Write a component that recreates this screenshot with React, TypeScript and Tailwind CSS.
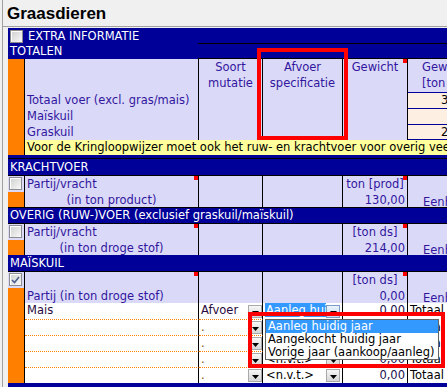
import clsx from "clsx";

const font = "font-['DejaVu_Sans',sans-serif]";

// column widths incl. right border
const C0 = "w-[17px] shrink-0 border-r border-black";
const C1 = "w-[174px] shrink-0 border-r border-black";
const C2 = "w-[64px] shrink-0 border-r border-black";
const C3 = "w-[80px] shrink-0 border-r border-black";
const C4 = "w-[65px] shrink-0 border-r border-black";
const C5 = "w-[76px] shrink-0";

function Checkbox({ checked = false }: { checked?: boolean }) {
  return (
    <div className="flex h-[13px] w-[13px] items-center justify-center border border-[#8d8d8d] bg-linear-to-br from-[#cfcfcf] to-[#f9f9f9] shadow-[inset_1px_1px_0_#ffffff]">
      {checked && (
        <svg width="9" height="8" viewBox="0 0 9 8">
          <path d="M1 4l2.5 2.5L8 1" fill="none" stroke="#4b5d8c" strokeWidth="1.6" />
        </svg>
      )}
    </div>
  );
}

function DropButton({ focused = false }: { focused?: boolean }) {
  return (
    <div
      className={clsx(
        "flex h-[13px] w-[14px] shrink-0 items-end justify-center border pb-[2px]",
        focused
          ? "border-[#7a9cc8] bg-linear-to-b from-[#eaf2fb] to-[#c6dcf2]"
          : "border-[#a9a9a9] bg-linear-to-b from-[#f7f7f7] to-[#d6d6d6]"
      )}
    >
      <svg width="7" height="4" viewBox="0 0 7 4">
        <path d="M0 0h7L3.5 4z" fill="#000" />
      </svg>
    </div>
  );
}

function Marker() {
  return <div className="absolute right-0 top-0 h-[4px] w-[4px] bg-[#ff0000]" />;
}

function PartijRow({
  checked,
  line1,
  line2,
  center2,
  unit,
  value,
}: {
  checked?: boolean;
  line1: string;
  line2: string;
  center2?: boolean;
  unit: string;
  value: string;
}) {
  return (
    <div className="flex h-[31px] bg-[#dadaf8] leading-[16px] text-[#32169e]">
      <div className={clsx(C0, "flex flex-col")}>
        <div className="h-[16px] bg-[#dadaf8] pl-[1px] pt-[1px]">
          <Checkbox checked={checked} />
        </div>
        <div className="flex-1 bg-[#ff8000]" />
      </div>
      <div className={clsx(C1, "relative")}>
        <Marker />
        <div className="h-[16px] pl-[2px]">{line1}</div>
        <div className={clsx("h-[15px]", center2 ? "text-center" : "pl-[2px]")}>{line2}</div>
      </div>
      <div className={C2} />
      <div className={C3} />
      <div className={clsx(C4, "relative")}>
        <Marker />
        <div className="h-[16px] text-center">{unit}</div>
        <div className="h-[15px] pr-[2px] text-right">{value}</div>
      </div>
      <div className={clsx(C5, "overflow-hidden pl-[15px] pt-[18px]")}>Eenheid</div>
    </div>
  );
}

const rows = [
  { label: "Mais", soort: "Afvoer", spec: "Aanleg huidig jaar", selected: true },
  { label: "", soort: ".", spec: "<n.v.t.>" },
  { label: "", soort: ".", spec: "<n.v.t.>" },
  { label: "", soort: ".", spec: "<n.v.t.>" },
  { label: "", soort: ".", spec: "<n.v.t.>" },
];
const rowH = ["h-[17px]", "h-[16px]", "h-[16px]", "h-[16px]", "h-[15px]"];

export default function App() {
  return (
    <div className={clsx("relative h-[387px] w-[447px] overflow-hidden bg-[#f0f0f0] text-[11.5px]", font)}>
      <div className="ml-[2px] h-full border-l border-[#a0a0a0]">
        <div className="h-[27px] border-b border-[#a0a0a0] pl-[4px] pt-[1px] font-['Liberation_Sans',sans-serif] text-[17px] font-bold leading-[26px] text-black">
          Graasdieren
        </div>

        <div className="ml-[5px] mt-[1px] w-[476px] whitespace-nowrap">
          {/* EXTRA INFORMATIE */}
          <div className="flex h-[16px] bg-[#000099] leading-[16px] text-white">
            <div className="flex w-[190px] shrink-0 items-start gap-[5px] pl-[2px] pt-[2px]">
              <Checkbox />
              <span className="-mt-[2px]">EXTRA INFORMATIE</span>
            </div>
            <div className="flex-1 border-b border-black" />
          </div>
          {/* TOTALEN */}
          <div className="flex h-[15px] bg-[#000099] leading-[15px] text-white">
            <div className="w-[190px] shrink-0 pl-[2px]">TOTALEN</div>
            <div className="flex-1 border-b border-black" />
          </div>

          {/* totalen block */}
          <div className="flex h-[81px] bg-[#dadaf8] leading-[16px] text-[#32169e]">
            <div className={clsx(C0, "bg-[#ff8000]")} />
            <div className={clsx(C1, "pl-[2px] pt-[33px]")}>
              <div className="h-[16px]">Totaal voer (excl. gras/mais)</div>
              <div className="h-[16px]">Maïskuil</div>
              <div className="h-[16px]">Graskuil</div>
            </div>
            <div className={clsx(C2, "text-center")}>
              <div>Soort</div>
              <div>mutatie</div>
            </div>
            <div className={clsx(C3, "text-center")}>
              <div>Afvoer</div>
              <div>specificatie</div>
            </div>
            <div className={clsx(C4, "relative text-center")}>
              <Marker />
              <div>Gewicht</div>
            </div>
            <div className={clsx(C5, "overflow-hidden")}>
              <div className="h-[33px] pl-[14px]">
                <div>Gewicht</div>
                <div>[ton ds]</div>
              </div>
              <div className="h-[16px] border-t border-[#000099] bg-[#fdf0e3] pl-[33px] leading-[15px] text-black">
                3.517,20
              </div>
              <div className="h-[16px] border-t border-[#000099] bg-[#fdf0e3]" />
              <div className="h-[16px] border-y border-[#000099] bg-[#fdf0e3] pl-[33px] leading-[14px] text-black">
                2.081,40
              </div>
            </div>
          </div>

          {/* note */}
          <div className="flex h-[15px] leading-[15px]">
            <div className={clsx(C0, "bg-[#ff8000]")} />
            <div className="flex-1 overflow-hidden bg-[#ffff9c] pl-[2px] text-black">
              Voor de Kringloopwijzer moet ook het ruw- en krachtvoer voor overig vee worden ingevuld
            </div>
          </div>

          {/* KRACHTVOER */}
          <div className="h-[3px] bg-[#000099]" />
          <div className="h-[18px] border-y border-black bg-[#000099] pl-[2px] leading-[16px] text-white">KRACHTVOER</div>
          <PartijRow line1="Partij/vracht" line2="(in ton product)" center2 unit="ton [prod]" value="130,00" />

          {/* OVERIG */}
          <div className="h-[17px] border-y border-black bg-[#000099] pl-[2px] leading-[15px] text-white">
            OVERIG (RUW-)VOER (exclusief graskuil/maïskuil)
          </div>
          <PartijRow line1="Partij/vracht" line2="(in ton droge stof)" center2 unit="[ton ds]" value="214,00" />

          {/* MAISKUIL */}
          <div className="h-[17px] border-b border-black bg-[#000099] pl-[2px] leading-[16px] text-white">MAÏSKUIL</div>
          <PartijRow checked line1="" line2="Partij (in ton droge stof)" unit="[ton ds]" value="0,00" />

          {/* data rows */}
          {rows.map((r, i) => (
            <div key={i} className={clsx("flex bg-white leading-[15px]", rowH[i])}>
              <div className={clsx(C0, "bg-[#ff8000]")} />
              <div
                className={clsx(
                  C1,
                  "pl-[2px] text-[#2a0a40]",
                  i < 4 && "border-b border-b-[#ff8000] border-dotted [border-right-style:solid]"
                )}
              >
                {r.label}
              </div>
              <div
                className={clsx(
                  C2,
                  "flex items-start pt-[1px]",
                  i < 4 && "border-b border-b-[#ff8000] border-dotted [border-right-style:solid]"
                )}
              >
                <span className={clsx("-mt-[1px] flex-1 pl-[2px]", r.soort === "." ? "text-[#8a4a10]" : "text-[#2a0a40]")}>
                  {r.soort}
                </span>
                <div className={i === 0 ? "mt-[1px]" : ""}>
                  <DropButton />
                </div>
              </div>
              <div className={clsx(C3, "flex items-start pl-[2px] pt-[1px]")}>
                <span
                  className={clsx(
                    "-mt-[1px] h-[14px] w-[61px] overflow-hidden",
                    r.selected ? "bg-[#3399ff] pl-[1px] text-white" : "pl-[1px] text-black"
                  )}
                >
                  {r.spec}
                </span>
                <div className={i === 0 ? "mt-[1px]" : ""}>
                  <DropButton focused={r.selected} />
                </div>
              </div>
              <div className={clsx(C4, "pr-[2px] text-right text-[#1a1050]")}>0,00</div>
              <div className={clsx(C5, "pl-[2px] text-black")}>Totaal</div>
            </div>
          ))}
          <div className="h-[10px] bg-[#000099]" />
        </div>
      </div>

      {/* open dropdown list */}
      <div className="absolute left-[265px] top-[319px] w-[174px] border border-[#646464] bg-white leading-[13px] text-black">
        <div className="bg-[#3399ff] pl-[2px] text-white">Aanleg huidig jaar</div>
        <div className="pl-[2px]">Aangekocht huidig jaar</div>
        <div className="pl-[2px]">Vorige jaar (aankoop/aanleg)</div>
      </div>

      {/* annotation boxes */}
      <div className="absolute left-[257px] top-[48px] h-[92px] w-[91px] border-4 border-[#ff0000]" />
      <div className="absolute left-[248px] top-[312px] h-[56px] w-[197px] border-4 border-[#ff0000]" />
    </div>
  );
}
